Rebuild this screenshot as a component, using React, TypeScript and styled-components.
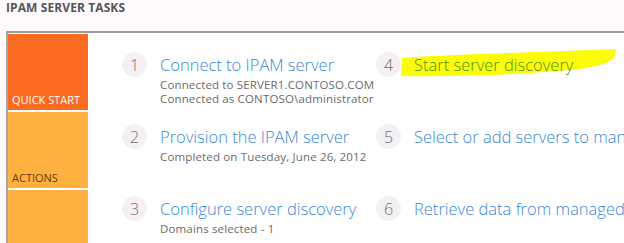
import React from 'react'
import styled, { createGlobalStyle } from 'styled-components'

const GlobalStyle = createGlobalStyle`
  html, body {
    margin: 0;
    padding: 0;
    background: #fdf9fd;
    overflow: hidden;
  }
  body {
    width: 624px;
    height: 243px;
    font-family: "Open Sans", "Noto Sans", Arial, sans-serif;
  }
`

const Page = styled.div`
  width: 624px;
  height: 243px;
  overflow: hidden;
`

const Header = styled.div`
  height: 31px;
  padding: 0 0 0 6px;
  box-sizing: border-box;
  font-size: 12px;
  line-height: 15px;
  font-weight: 700;
  color: #555;
  letter-spacing: 0.1px;
`

const Panel = styled.div`
  margin-left: 6px;
  border-top: 2px solid #9c9c9c;
  border-left: 2px solid #a4a4a4;
  background: #fff;
  display: flex;
  height: 240px;
  width: 700px;
`

const Sidebar = styled.div`
  width: 80px;
  flex: none;
  display: flex;
  flex-direction: column;
  gap: 2px;
  padding: 1px 0 0 0;
`

const Tile = styled.div<{ $active?: boolean; $grow?: boolean }>`
  height: 76px;
  flex: ${p => (p.$grow ? '1' : 'none')};
  background: ${p => (p.$active ? '#fb6a21' : '#ffb03e')};
  color: ${p => (p.$active ? '#fff' : '#6a3c12')};
  font-size: 11px;
  white-space: nowrap;
  display: flex;
  align-items: flex-end;
  padding: 0 0 3px 4px;
  box-sizing: border-box;
`

const Content = styled.div`
  flex: none;
  display: grid;
  grid-template-columns: 254px 1fr;
  grid-auto-rows: 72px;
  padding: 19px 0 0 34px;
`

const Step = styled.div`
  display: flex;
  align-items: flex-start;
  gap: 13px;
  white-space: nowrap;
`

const Circle = styled.div`
  width: 25px;
  height: 25px;
  border-radius: 50%;
  background: #f4f0f4;
  color: #707070;
  font-size: 16px;
  font-weight: 300;
  display: flex;
  align-items: center;
  justify-content: center;
  flex: none;
`

const Body = styled.div`
  display: flex;
  flex-direction: column;
`

const Title = styled.div<{ $done?: boolean }>`
  position: relative;
  isolation: isolate;
  font-size: 16.5px;
  font-weight: 300;
  line-height: 25px;
  color: ${p => (p.$done ? '#4b9410' : '#3a87d4')};
`

const Highlight = styled.svg`
  position: absolute;
  left: -14px;
  top: -4px;
  z-index: -1;
`

const Sub = styled.div`
  font-size: 11.5px;
  line-height: 13px;
  letter-spacing: 0.15px;
  color: #6b6b6b;
  margin-top: 1px;
`

const steps = [
  { n: 1, title: 'Connect to IPAM server', sub: ['Connected to SERVER1.CONTOSO.COM', 'Connected as CONTOSO\\administrator'] },
  { n: 4, title: 'Start server discovery', sub: [], done: true },
  { n: 2, title: 'Provision the IPAM server', sub: ['Completed on Tuesday, June 26, 2012'] },
  { n: 5, title: 'Select or add servers to manage and verify IPAM access', sub: [] },
  { n: 3, title: 'Configure server discovery', sub: ['Domains selected - 1'] },
  { n: 6, title: 'Retrieve data from managed servers', sub: [] },
]

export default function App() {
  return (
    <Page>
      <GlobalStyle />
      <Header>IPAM SERVER TASKS</Header>
      <Panel>
        <Sidebar>
          <Tile $active>QUICK START</Tile>
          <Tile>ACTIONS</Tile>
          <Tile $grow />
        </Sidebar>
        <Content>
          {steps.map(s => (
            <Step key={s.n}>
              <Circle>{s.n}</Circle>
              <Body>
                <Title $done={s.done}>
                  {s.done && (
                    <Highlight width="218" height="32" viewBox="0 0 218 32">
                      <path
                        d="M2 10 C40 7 140 4 216 1 L215 8 C210 16 192 20 170 22 C122 26 72 29 1 28 Z"
                        fill="#fdfb0c"
                      />
                    </Highlight>
                  )}
                  {s.title}
                </Title>
                {s.sub.map(line => (
                  <Sub key={line}>{line}</Sub>
                ))}
              </Body>
            </Step>
          ))}
        </Content>
      </Panel>
    </Page>
  )
}
